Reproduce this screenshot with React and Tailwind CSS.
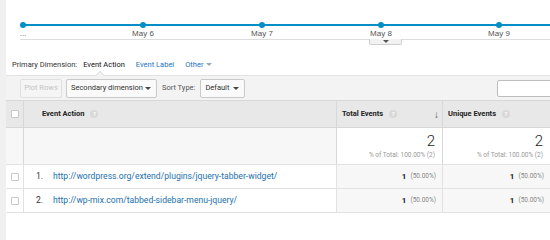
import React from 'react';

const ticks = [
  { x: 17, label: '...' },
  { x: 137, label: 'May 6' },
  { x: 256, label: 'May 7' },
  { x: 375, label: 'May 8' },
  { x: 493, label: 'May 9' },
];

const rows = [
  { n: '1.', url: 'http://wordpress.org/extend/plugins/jquery-tabber-widget/' },
  { n: '2.', url: 'http://wp-mix.com/tabbed-sidebar-menu-jquery/' },
];

const Help = () => (
  <span className="ml-[6px] inline-flex h-[8px] w-[8px] items-center justify-center rounded-full bg-[#d8d8d8] text-[6px] font-bold leading-none text-white">?</span>
);

const Caret = ({ className = 'border-t-[#444]' }) => (
  <span className={`inline-block h-0 w-0 border-x-[3px] border-t-[3px] border-x-transparent ${className}`} />
);

const Checkbox = () => (
  <span className="block h-[8px] w-[8px] rounded-[1px] border border-[#c8c8c8] bg-white" />
);

export default function App() {
  return (
    <div className="flex h-[240px] w-[550px] overflow-hidden bg-white font-['Roboto',sans-serif] text-[#333]">
      <div className="w-[6px] shrink-0 bg-[#f0f0f0]" />
      <div className="flex flex-1 flex-col">
        {/* chart */}
        <div className="relative h-[48px]">
          <svg width="544" height="48" className="block">
            <line x1="17" y1="25" x2="544" y2="25" stroke="#058dc7" strokeWidth="2" />
            {ticks.map((t) => (
              <g key={t.x}>
                <circle cx={t.x} cy="25" r="3" fill="#058dc7" />
                <text x={t.x} y="36" fontSize="8" fill="#555" textAnchor="middle" fontFamily="Liberation Sans, Arial, sans-serif">
                  {t.label}
                </text>
              </g>
            ))}
            <line x1="14" y1="39.5" x2="544" y2="39.5" stroke="#dddddd" strokeWidth="1" />
          </svg>
          <div className="absolute left-[363px] top-[39px] flex h-[6px] w-[33px] items-center justify-center rounded-b-[2px] border border-t-0 border-[#cfcfcf] bg-[#f2f2f2]">
            <Caret className="border-t-[#555]" />
          </div>
        </div>

        {/* primary dimension */}
        <div className="flex h-[27px] items-center gap-[6px] pl-[6px] pt-[6px] text-[7.5px]">
          <span className="text-[#333]">Primary Dimension:</span>
          <span className="text-[#111]">Event Action</span>
          <span className="ml-[5px] text-[#1a73c9]">Event Label</span>
          <span className="ml-[5px] flex items-center gap-[3px] text-[#1a73c9]">
            Other <Caret className="border-t-[#9ab]" />
          </span>
        </div>

        {/* toolbar */}
        <div className="relative flex h-[25px] items-center border-t border-[#e2e2e2] bg-[#f3f3f3] pl-[14px] text-[7.5px]">
          <span className="absolute left-[91px] top-[-4px] h-[6px] w-[6px] rotate-45 border-l border-t border-[#e2e2e2] bg-[#f3f3f3]" />
          <div className="flex h-[19px] w-[42px] items-center justify-center rounded-[2px] border border-[#e0e0e0] bg-[#f5f5f5] text-[#c4c4c4]">
            Plot Rows
          </div>
          <div className="ml-[4px] flex h-[19px] w-[91px] items-center justify-between rounded-[2px] border border-[#c9c9c9] bg-[#fafafa] pl-[4px] pr-[5px] text-[#333]">
            Secondary dimension <Caret />
          </div>
          <span className="ml-[5px] text-[#555]">Sort Type:</span>
          <div className="ml-[5px] flex h-[19px] w-[45px] items-center justify-between rounded-[2px] border border-[#c9c9c9] bg-[#fafafa] pl-[4px] pr-[5px] text-[#333]">
            Default <Caret />
          </div>
          <div className="ml-auto h-[17px] w-[56px] -mr-[3px] rounded-[2px] border border-[#bdbdbd] bg-white" />
        </div>

        {/* table */}
        <div className="grid grid-cols-[18px_313px_106px_107px] text-[7.5px]">
          {/* header */}
          <div className="flex h-[27px] items-center justify-center border-r border-t border-[#d8d8d8] bg-[#e8e8e8]">
            <Checkbox />
          </div>
          <div className="flex items-center border-r border-t border-[#d8d8d8] bg-[#e8e8e8] pl-[18px] font-bold text-[#222]">
            Event Action <Help />
          </div>
          <div className="flex items-center border-r border-t border-[#d8d8d8] bg-[#e8e8e8] pl-[5px] pr-[3px] font-bold text-[#222]">
            Total Events <Help />
            <span className="ml-auto text-[10px] font-normal text-[#555]">↓</span>
          </div>
          <div className="flex items-center border-t border-[#d8d8d8] bg-[#e8e8e8] pl-[5px] font-bold text-[#222]">
            Unique Events <Help />
          </div>

          {/* totals */}
          <div className="h-[37px] border-r border-t border-[#d8d8d8] bg-[#f7f7f7]" />
          <div className="border-r border-t border-[#d8d8d8] bg-[#f7f7f7]" />
          {['a', 'b'].map((k, i) => (
            <div key={k} className={`flex flex-col items-end justify-end border-t border-[#d8d8d8] bg-white pb-[5px] pr-[7px] ${i === 0 ? 'border-r' : ''}`}>
              <span className="text-[15px] font-light leading-[15px] text-[#222]">2</span>
              <span className="mt-[2px] text-[6.5px] leading-[8px] text-[#999]">% of Total: 100.00% (2)</span>
            </div>
          ))}

          {/* rows */}
          {rows.map((r) => (
            <React.Fragment key={r.n}>
              <div className="flex h-[24px] items-center justify-center border-r border-t border-[#e2e2e2] bg-white">
                <Checkbox />
              </div>
              <div className="flex items-center border-r border-t border-[#e2e2e2] bg-white pl-[12px] text-[8.6px]">
                <span className="w-[17px] text-[#333]">{r.n}</span>
                <span className="text-[#1c6fae]">{r.url}</span>
              </div>
              <div className="flex items-center justify-end border-r border-t border-[#e2e2e2] bg-[#f7f7f7] pr-[6px]">
                <span className="text-[8px] font-bold text-[#222]">1</span>
                <span className="ml-[4px] text-[6.5px] text-[#888]">(50.00%)</span>
              </div>
              <div className="flex items-center justify-end border-t border-[#e2e2e2] bg-[#f7f7f7] pr-[6px]">
                <span className="text-[8px] font-bold text-[#222]">1</span>
                <span className="ml-[4px] text-[6.5px] text-[#888]">(50.00%)</span>
              </div>
            </React.Fragment>
          ))}
          <div className="col-span-4 border-t border-[#e2e2e2]" />
        </div>
      </div>
    </div>
  );
}
